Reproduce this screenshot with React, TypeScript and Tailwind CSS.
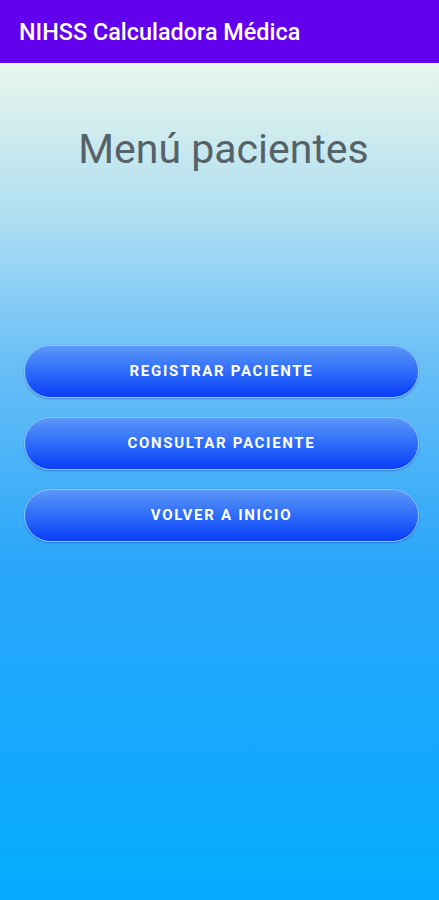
import React from "react";

export default function App() {
  const buttons = ["REGISTRAR PACIENTE", "CONSULTAR PACIENTE", "VOLVER A INICIO"];

  return (
    <div className="h-[900px] w-full flex flex-col font-['Roboto',sans-serif]">
      {/* barra superior */}
      <header className="h-[63px] bg-[#6200ee] flex items-center px-[19px] shrink-0">
        <h1 className="text-white text-[23.4px] font-medium pt-[2px]">NIHSS Calculadora Médica</h1>
      </header>

      <main className="flex-1 bg-[linear-gradient(180deg,#e9f6eb_0%,#a9dcf2_20%,#6cc0f6_35%,#2aa6fa_60%,#04abff_100%)] pl-[24px] pr-[20px]">
        <h2 className="text-center text-[41px] text-[#566269] mt-[56px] pl-[4px]">Menú pacientes</h2>

        <div className="mt-[164px] flex flex-col gap-[19px]">
          {buttons.map((b) => (
            <button
              key={b}
              className="h-[53px] w-full rounded-full border border-[#8cc4fb] bg-[linear-gradient(180deg,#5b98f9_0%,#2e6cf8_50%,#0a3df7_100%)] shadow-[0_1px_2px_rgba(0,40,160,0.35)] text-white text-[15px] font-bold tracking-[1.7px]"
            >
              {b}
            </button>
          ))}
        </div>
      </main>
    </div>
  );
}
